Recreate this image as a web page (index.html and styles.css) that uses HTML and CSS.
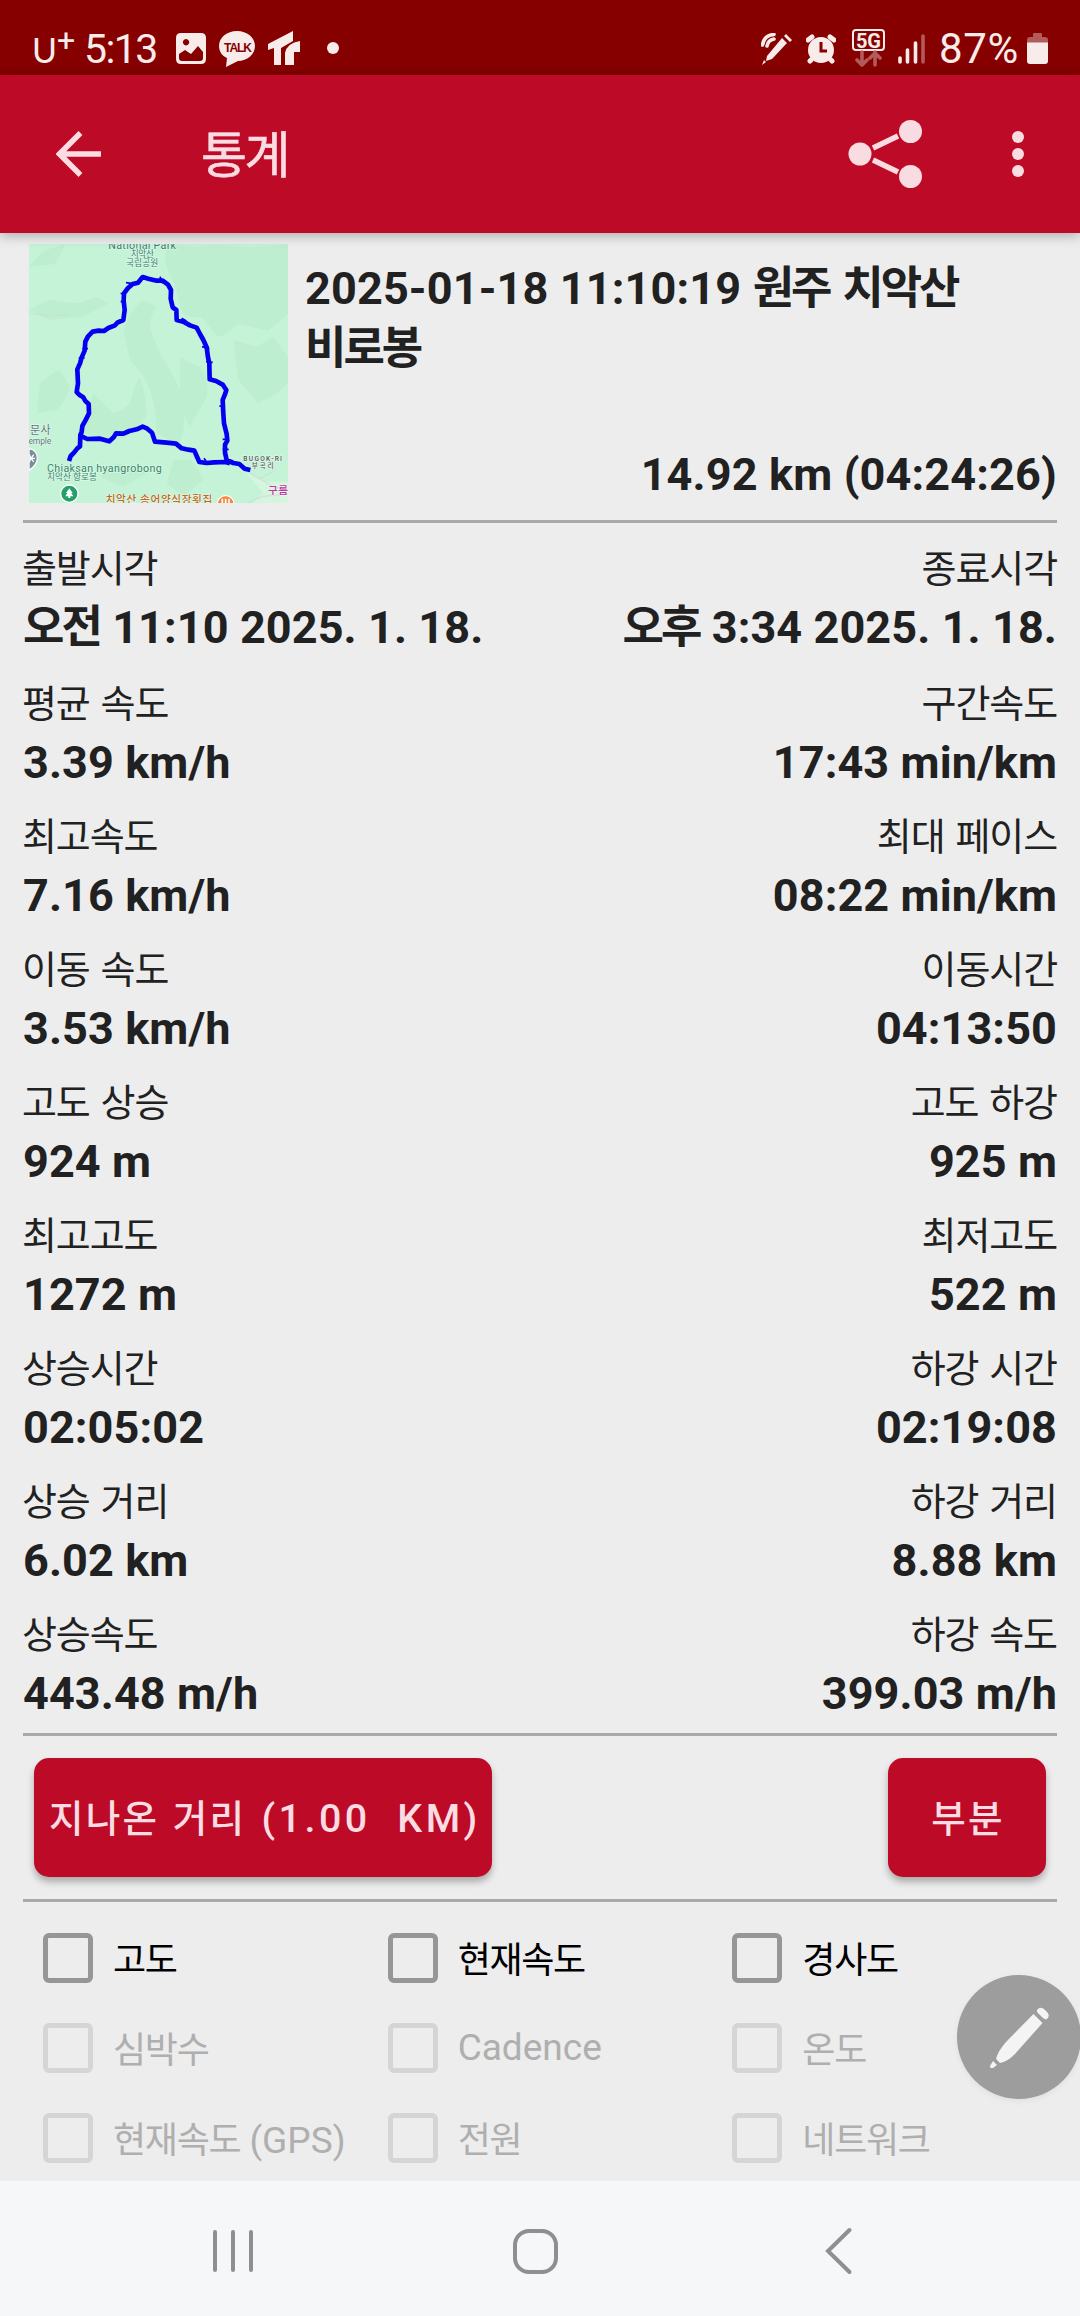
FILE: index.html
```html
<!doctype html>
<html lang="ko">
<head>
	<meta charset="UTF-8">
	<title>통계</title>
	<link rel="stylesheet" href="styles.css">
</head>
<body>
	<div class="status">
		<span class="carrier">U</span><span class="plus">+</span>
		<span class="time">5:13</span>
		<svg class="s-pic" width="32" height="32" viewBox="0 0 32 32"><path fill-rule="evenodd" d="M6 0h20q5 0 5 5v21q0 5-5 5H6q-5 0-5-5V5q0-5 5-5zM4 21v4q0 3 3 3h18q3 0 3-3v-6l-5-6-7 8-6-4zM11 6a3.2 3.2 0 1 0 .1 0z"/></svg>
		<svg class="s-talk" width="38" height="36" viewBox="0 0 38 36"><path d="M19 0c10 0 18 6.500 18 15s-8 15-17 15L8 36l1-9C4 25 1 20 1 15 1 6.500 9 0 19 0z"/><text x="19.500" y="20.500" text-anchor="middle">TALK</text></svg>
		<svg class="s-tt" width="32" height="35" viewBox="0 0 32 35"><path d="M0 13L25 0v10L13 17v17H6V17L0 19zM32 10v11h-6v13h-9V22q2-10 15-12z"/></svg>
		<span class="dot"></span>
		<div class="status-right">
			<svg class="s-pen" width="31" height="32" viewBox="0 0 31 32"><path d="M21 5l5 5L11 26l-6 2 1-5zM23 3l2-2 6 6-2 2zM3 27l2 2-4 3z"/><path class="line" d="M1.500 12Q3 2 13 1.500M6 13Q7 7 13 6"/></svg>
			<svg class="s-alarm" width="30" height="30" viewBox="0 0 30 30"><circle cx="15" cy="16" r="13"/><path class="line thick" d="M2 6l4-3M24 3l4 3M5 26l-1 1M25 26l1 1"/><path class="cut" d="M15 8v9h6"/></svg>
			<svg class="s-5g" width="34" height="38" viewBox="0 0 34 38"><rect class="line thin" x="1" y="1" width="31" height="20" rx="3"/><text x="16.500" y="18.500" text-anchor="middle" textLength="25">5G</text><path class="line faint" d="M10 23v13M5 31l5 5 5-5M23 36V23M18 29l5-5 5 5"/></svg>
			<svg class="s-signal" width="28" height="30" viewBox="0 0 28 30"><path class="line" d="M2 24v4M9.500 16v12M17.500 9v19"/><path class="line faint" d="M25 2v26"/></svg>
			<span class="battery-num">87%</span>
			<svg class="s-battery" width="21" height="32" viewBox="0 0 21 32"><path class="dim" d="M6 1q0-1 1-1h7q1 0 1 1v3h3q3 0 3 3v3H0V7q0-3 3-3h3z"/><path d="M0 9.500h21V28q0 3-3 3H3q-3 0-3-3z"/></svg>
		</div>
	</div>

	<div class="appbar">
		<svg class="back" width="46" height="46" viewBox="0 0 46 46"><path d="M24.500 2L3.500 23l21 21M4 23h41"/></svg>
		<h1>통계</h1>
		<svg class="share" width="74" height="70" viewBox="0 0 74 70"><circle cx="12" cy="35" r="11.500"/><circle cx="62.500" cy="12.500" r="11.500"/><circle cx="62.500" cy="57.500" r="11.500"/><path d="M25 29l25-12M25 41l25 12"/></svg>
		<svg class="more" width="12" height="46" viewBox="0 0 12 46"><circle cx="6" cy="6" r="6"/><circle cx="6" cy="23" r="6"/><circle cx="6" cy="40" r="6"/></svg>
	</div>

	<div class="content">
		<div class="summary">
			<svg class="map" width="259" height="259" viewBox="87 42 777 777">
				<rect x="87" y="42" width="777" height="777" fill="#c5f3d7"/>
				<!-- 지형 음영 -->
				<g fill="#beeed0">
					<path d="M500 42l90 10 60-10q100 20 214 0v210q-30 30-60 50l-90-20q-30 30-60 40l-50-60q-50 0-60-20l-20-80q-40-60-24-120zM370 300q20-60 60-90l40 20q-20 30-20 60 20 70 60 130 30 50 40 90 10 70-10 130-40-10-70-30 0-70-20-130-20-50-60-90zM87 240q30-20 60-30l90 10 50-20 40 20-80 40-100 10zM250 610q10-70 30-120l60 60q30-10 50-30 10-50 30-80 20 60 20 120l-60 60-60 10zM540 380q30 20 60 30 30 40 20 90l-50 90-30-60zM700 330l70 20 50-30 44 60v80q-40 40-90 60l-60-70zM87 110q20-30 50-50l60-18-30 60zM120 460q30-30 60-40l30 50q-10 40-40 70l-60 10zM300 740l50-40 90 30-70 40zM520 690h50q30 30 40 60l-60 50-50-40z"/>
				</g>
				<path d="M735 725l60 30h69v64H760l30-30z" fill="#d6f5df"/>
				<path d="M750 730l70 40 44 10M780 745l40-20M740 819l50-20 74-6M90 250l60 8 60-5" fill="none" stroke="#c8dfd6" stroke-width="3"/>
				<path class="track" d="M207 693L212 678 222 668 232 655 240 649 241 615 245 606 247 588 256 572 267 550 266 522 256 513 250 502 240 496 230 486 234 460 232 418 240 400 245 382 254 362 256 335 264 319 278 305 296 302 312 303 325 294 345 286 352 278 370 270 374 240 371 212 372 190 384 174 398 162 414 158 428 141 445 146 470 152 488 152 504 164 513 180 512 206 518 232 529 240 530 270 550 275 570 286 590 293 600 312 610 330 620 352 624 382 628 400 629 448 648 453 668 464 679 480 676 490 668 510 670 550 672 580 680 612 682 632 675 644 675 668 680 690 700 699 718 702 734 716 751 720"/>
				<path class="track" d="M240 617L262 627 300 626 328 634 341 622 348 610 370 611 388 603 410 598 428 590 442 596 456 608 465 635 500 638 528 641 545 655 565 659 583 662 590 678 598 696 620 699 642 697 675 696 690 700"/>
				<path class="spur" d="M378 158l16 2M480 140l8 20M362 215l16 0M362 190l12 4M545 265l14 8M606 350l22 6M618 395l20 2M658 528l16 2M668 658l18 0M612 685l10 14M247 356l17 0M236 384l18 0M668 628l18 0"/>
				<g class="map-text">
					<text class="park" x="325" y="56" textLength="203">National Park</text>
					<text class="sm green" x="392" y="81" textLength="70">치악산</text>
					<text class="sm green" x="378" y="108" textLength="97">국립공원</text>
					<text class="gray" x="90" y="613" textLength="62">문사</text>
					<text class="gray sm" x="72" y="643" textLength="82">Temple</text>
					<text class="park" x="141" y="725" textLength="344">Chiaksan hyangrobong</text>
					<text class="sm green" x="141" y="751" textLength="150">치악산 향로봉</text>
					<text class="dark" x="730" y="692" textLength="116">BUGOK-RI</text>
					<text class="dark" x="755" y="714" textLength="66">부곡리</text>
					<text class="pink" x="804" y="791" textLength="60">구름</text>
					<text class="orange" x="317" y="820" textLength="320">치악산 송어양식장횟집</text>
				</g>
				<path d="M87 656q25 4 25 29 0 20-25 36z" fill="#78909c" stroke="#fff" stroke-width="4"/>
				<path d="M87 674l14 22M101 674l-14 22M87 685h18" stroke="#fff" stroke-width="4"/>
				<circle cx="208" cy="791" r="26" fill="#23a16d" stroke="#fff" stroke-width="4"/>
				<path d="M208 775l-10 14h4l-6 10h9v5h6v-5h9l-6-10h4z" fill="#fff"/>
				<circle cx="677" cy="822" r="25" fill="#f5843c" stroke="#fff" stroke-width="4"/>
				<path d="M667 806v13M677 806v13M687 806v13" stroke="#fff" stroke-width="5"/>
			</svg>
			<div class="summary-text">
				<h2>2025-01-18 11:10:19 <span class="ko">원주 치악산<br>비로봉</span></h2>
				<p>14.92 km (04:24:26)</p>
			</div>
		</div>

		<div class="stats">
			<div class="stat first"><label>출발시각</label><b><span class="ko">오전</span> 11:10 2025. 1. 18.</b></div>
			<div class="stat first end"><label>종료시각</label><b><span class="ko">오후</span> 3:34 2025. 1. 18.</b></div>
			<div class="stat"><label>평균 속도</label><b>3.39 km/h</b></div>
			<div class="stat end"><label>구간속도</label><b>17:43 min/km</b></div>
			<div class="stat"><label>최고속도</label><b>7.16 km/h</b></div>
			<div class="stat end"><label>최대 페이스</label><b>08:22 min/km</b></div>
			<div class="stat"><label>이동 속도</label><b>3.53 km/h</b></div>
			<div class="stat end"><label>이동시간</label><b>04:13:50</b></div>
			<div class="stat"><label>고도 상승</label><b>924 m</b></div>
			<div class="stat end"><label>고도 하강</label><b>925 m</b></div>
			<div class="stat"><label>최고고도</label><b>1272 m</b></div>
			<div class="stat end"><label>최저고도</label><b>522 m</b></div>
			<div class="stat"><label>상승시간</label><b>02:05:02</b></div>
			<div class="stat end"><label>하강 시간</label><b>02:19:08</b></div>
			<div class="stat"><label>상승 거리</label><b>6.02 km</b></div>
			<div class="stat end"><label>하강 거리</label><b>8.88 km</b></div>
			<div class="stat"><label>상승속도</label><b>443.48 m/h</b></div>
			<div class="stat end"><label>하강 속도</label><b>399.03 m/h</b></div>
		</div>

		<div class="buttons">
			<button class="btn btn-dist"><span class="ko">지나온 거리</span> (1.00&nbsp; KM)</button>
			<button class="btn btn-part"><span class="ko">부분</span></button>
		</div>

		<div class="checks">
			<div class="check"><i></i><span class="ko">고도</span></div>
			<div class="check"><i></i><span class="ko">현재속도</span></div>
			<div class="check"><i></i><span class="ko">경사도</span></div>
			<div class="check off"><i></i><span class="ko">심박수</span></div>
			<div class="check off"><i></i><span>Cadence</span></div>
			<div class="check off"><i></i><span class="ko">온도</span></div>
			<div class="check off"><i></i><span><span class="ko">현재속도</span> (GPS)</span></div>
			<div class="check off"><i></i><span class="ko">전원</span></div>
			<div class="check off"><i></i><span class="ko">네트워크</span></div>
		</div>
	</div>

	<div class="navbar">
		<svg class="n-recent" width="40" height="44" viewBox="0 0 40 44"><path d="M2 3v38M20 3v38M38 3v38"/></svg>
		<svg class="n-home" width="45" height="45" viewBox="0 0 45 45"><rect x="2" y="2" width="41" height="41" rx="14"/></svg>
		<svg class="n-back" width="28" height="48" viewBox="0 0 28 48"><path d="M24.500 3L3 24l21.500 21"/></svg>
	</div>

	<div class="fab">
		<svg width="60" height="62" viewBox="0 0 60 62"><path d="M44.500 8l9 9L26 48q-8 8-15 9l-4-4q2-8 10-17z"/><path d="M48 4q4-5 9 1 5 4 1 8-3 1-7-4-4-3-3-5zM4 55l4 4-4 3q-3 1-3-2z"/></svg>
	</div>
</body>
</html>
```
FILE: styles.css
```css
*{ box-sizing: border-box; margin: 0; padding: 0;}
body{ width: 1080px; height: 2316px; position: relative; overflow: hidden; background: #ededed; color: #212121; font-family: Roboto,"Noto Sans CJK KR",sans-serif; font-size: 45px; display: flex; flex-direction: column;}
svg{ display: block; flex: none;}
.ko{ letter-spacing: -0.066em; word-spacing: 0.1em;}

/*상태바*/
.status{ height: 75px; flex: none; background: #870000; color: #f8ecea; fill: #f8ecea; display: flex; align-items: flex-start; padding: 29px 32px 0 32px; white-space: nowrap;}
.status .line{ fill: none; stroke: #f8ecea; stroke-width: 3.6; stroke-linecap: round;}
.status .thick{ stroke-width: 5;}
.status .thin{ stroke-width: 2;}
.status .faint{ stroke: #b35a5a;}
.status .dim{ fill: #b35a5a;}
.status .cut{ fill: none; stroke: #870000; stroke-width: 3;}
.carrier{ width: 25px; font-family: Lato,sans-serif; font-size: 34px; line-height: 42px;}
.plus{ width: 27px; font-size: 32px; line-height: 22px;}
.time{ width: 91px; font-size: 41px; line-height: 40px; letter-spacing: -1.6px;}
.s-pic{ margin-top: 4px;}
.s-talk{ margin: 2px 0 0 11px;}
.s-talk text{ font: bold 12px "Liberation Sans",sans-serif; letter-spacing: -1px; fill: #870000;}
.s-tt{ margin: 2px 0 0 12px;}
.dot{ width: 12px; height: 12px; margin: 13px 0 0 27px; border-radius: 50%; background: #f8ecea;}
.status-right{ margin-left: auto; display: flex; align-items: flex-start;}
.s-pen{ margin: 4px 14px 0 0;}
.s-alarm{ margin: 5px 16px 0 0;}
.s-5g{ margin-right: 12px;}
.s-5g text{ font: bold 20px Roboto,sans-serif;}
.s-signal{ margin: 5px 13px 0 0;}
.battery-num{ width: 88px; font-size: 42px; line-height: 39px; letter-spacing: 0.7px;}
.s-battery{ margin-top: 4px;}

/*상단바*/
.appbar{ height: 158px; flex: none; position: relative; background: #bd0a26; fill: #f9dce1; display: flex; align-items: center; padding: 0 56px; box-shadow: 0 2px 12px rgba(0,0,0,.3);}
.back{ fill: none; stroke: #fbdce2; stroke-width: 5.5;}
.appbar h1{ margin-left: 99px; padding-top: 3px; color: #fbdce2; font-size: 50px; font-weight: 400; line-height: 60px; letter-spacing: -2.5px; -webkit-text-stroke: 0.6px #fbdce2;}
.share{ margin: 0 90px 0 auto;}
.share path{ stroke: #f9dce1; stroke-width: 5.500;}

.content{ flex: 1; min-height: 0; padding: 11px 23px 0;}
.summary{ height: 279px; display: flex; padding: 0 0 17px 6px; border-bottom: 3px solid #a9a9a9;}
.summary-text{ flex: 1; margin-left: 17px; padding-top: 15px; display: flex; flex-direction: column; justify-content: space-between; letter-spacing: 0.15px;}
.summary-text h2{ font-size: 45px; line-height: 60px;}
.summary-text p{ margin-bottom: -2px; font-weight: bold; line-height: 60px; text-align: right;}

/*지도*/
.track{ fill: none; stroke: #0500f0; stroke-width: 14; stroke-linejoin: round;}
.spur{ fill: none; stroke: #0500f0; stroke-width: 5;}
.map-text{ font-size: 28px; paint-order: stroke; stroke: #e6faee; stroke-width: 3;}
.map-text .park{ font-size: 32px; fill: #2f8266;}
.map-text .sm{ font-size: 26px;}
.map-text .green{ fill: #2f8266;}
.map-text .gray{ fill: #5f757d;}
.map-text .gray:not(.sm){ font-size: 33px;}
.map-text .dark{ font-size: 20px; fill: #555; font-weight: 500;}
.map-text .pink{ font-size: 32px; fill: #c632a4; font-weight: 500;}
.map-text .orange{ font-size: 32px; fill: #c4661b; font-weight: 500;}

/*통계 목록*/
.stats{ height: 1213px; padding-top: 17px; display: grid; grid-template-columns: 1fr 1fr; grid-template-rows: 135px; grid-auto-rows: 133px; border-bottom: 3px solid #a9a9a9;}
.stat label{ display: block; margin-left: -1px; font-size: 38px; line-height: 58px; letter-spacing: -1.1px; word-spacing: 2.5px;}
.stat b{ display: block; line-height: 60px; letter-spacing: 0.1px; white-space: nowrap;}
.stat b .ko{ margin-right: 1px;}
.end{ text-align: right;}
.end label{ margin: 0;}

/*버튼*/
.buttons{ height: 166px; display: flex; justify-content: space-between; align-items: flex-start; padding: 22px 11px 0; border-bottom: 3px solid #a9a9a9;}
.btn{ height: 119px; padding: 0 0 4px 4px; border: 0; border-radius: 15px; background: #bd0a26; color: #fbdce2; font: 500 39.4px Roboto,"Noto Sans CJK KR",sans-serif; letter-spacing: 3.5px; white-space: nowrap; box-shadow: 0 5px 7px rgba(0,0,0,.28);}
.btn .ko{ margin-right: 2px; font-size: 37.500px; letter-spacing: 2.2px; word-spacing: 2px;}
.btn-dist{ width: 458px;}
.btn-part{ width: 158px;}

/*체크박스*/
.checks{ display: grid; grid-template-columns: repeat(3,1fr); grid-auto-rows: 90px; padding-top: 11px;}
.check{ display: flex; align-items: center; padding-left: 20px; color: #000; font-size: 37px; white-space: nowrap;}
.check i{ width: 50px; height: 50px; margin-right: 20px; border: 5px solid #969696; border-radius: 6px;}
.check > span{ padding-bottom: 2px;}
.check .ko{ font-size: 36px; letter-spacing: -1.3px;}
.off{ color: #afafaf;}
.off i{ border-color: #d5d5d5;}

/*하단 내비게이션*/
.navbar{ height: 135px; flex: none; background: #f6f7f9; display: flex; align-items: flex-start; padding: 48px 0 0 213px; fill: none; stroke: #8f8f8f; stroke-width: 4; stroke-linecap: round; position: relative;}
.n-home{ margin-left: 260px;}
.n-back{ margin: -2px 0 0 267px;}

.fab{ position: absolute; left: 957px; top: 1975px; width: 124px; height: 124px; border-radius: 50%; background: #9d9d9d; fill: #f4f4f5; display: flex; align-items: center; justify-content: center; box-shadow: 0 2px 6px rgba(0,0,0,.06);}
```
